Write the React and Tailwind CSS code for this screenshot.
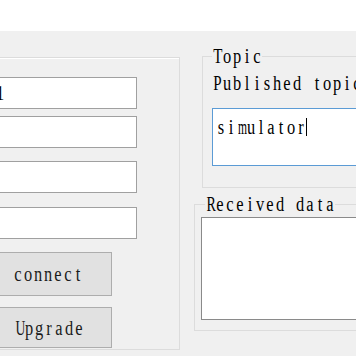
import React from "react";

const SCALE = {
  m: "scale-x-[0.58]",
  w: "scale-x-[0.62]",
  M: "scale-x-[0.55]",
  W: "scale-x-[0.5]",
  U: "scale-x-[0.68]",
  R: "scale-x-[0.7]",
  D: "scale-x-[0.7]",
  T: "scale-x-[0.75]",
  P: "scale-x-[0.75]",
};

function Mono({ text }) {
  return (
    <span className="inline-flex whitespace-nowrap" aria-label={text}>
      {text.split("").map((c, i) => (
        <span
          key={i}
          className={"inline-block w-[10px] text-center " + (SCALE[c] || "scale-x-[0.82]")}
        >
          {c === " " ? "\u00a0" : c}
        </span>
      ))}
    </span>
  );
}

function TextBox({ children, className = "" }) {
  return (
    <div
      className={
        "h-[32px] bg-white border border-[#a0a0a0] overflow-hidden flex items-center leading-[18px] text-black " +
        className
      }
    >
      {children}
    </div>
  );
}

function Btn({ children, className = "" }) {
  return (
    <div
      className={
        "bg-[#e1e1e1] border border-[#adadad] flex items-center justify-end text-[#1a1a1a] " +
        className
      }
    >
      {children}
    </div>
  );
}

export default function App() {
  return (
    <div className="w-[356px] h-[356px] overflow-hidden bg-white flex flex-col font-['Liberation_Serif','Times_New_Roman',serif] text-[20px] text-black">
      <div className="h-[31px] shrink-0 bg-white" />
      <div className="flex-1 bg-[#f0f0f0] flex items-start">
        {/* Left group box */}
        <div className="shrink-0 -ml-[100px] w-[280px] mt-[26px] h-[293px] border border-[#dcdcdc] shadow-[inset_1px_1px_0_#ffffff] pt-[19px] pr-[42px] flex flex-col">
          <TextBox>
            <span className="ml-[93px] text-black">
              <Mono text="1" />
            </span>
          </TextBox>
          <TextBox className="mt-[7px]" />
          <TextBox className="mt-[13px] h-[31px]" />
          <TextBox className="mt-[14px]" />
          <Btn className="mt-[13px] h-[44px] w-[211px] pr-[28px]">
            <Mono text="connect" />
          </Btn>
          <Btn className="mt-[11px] h-[41px] w-[211px] pr-[27px]">
            <Mono text="Upgrade" />
          </Btn>
        </div>

        {/* Right column */}
        <div className="shrink-0 flex flex-col">
          <fieldset className="ml-[22px] mt-[16px] w-[220px] h-[141px] border border-[#dcdcdc] pl-[9px]">
            <legend className="px-0 leading-[18px] text-black">
              <Mono text="Topic" />
            </legend>
            <div className="mt-[9px] leading-[18px] text-black whitespace-nowrap">
              <Mono text="Published topic" />
            </div>
            <div className="mt-[16px] h-[58px] w-[200px] bg-white border border-[#5b9bd5] pl-[3px] pt-[9px] leading-[18px] text-black flex items-start">
              <Mono text="simulator" />
              <span className="inline-block w-px h-[18px] bg-black" />
            </div>
          </fieldset>
          <fieldset className="ml-[14px] mt-[7px] w-[220px] h-[136px] border border-[#dcdcdc] pl-[6px]">
            <legend className="ml-[4px] px-0 leading-[18px] text-black">
              <Mono text="Received data" />
            </legend>
            <div className="mt-[4px] h-[103px] w-[220px] bg-white border border-[#8a8a8a]" />
          </fieldset>
        </div>
      </div>
    </div>
  );
}
